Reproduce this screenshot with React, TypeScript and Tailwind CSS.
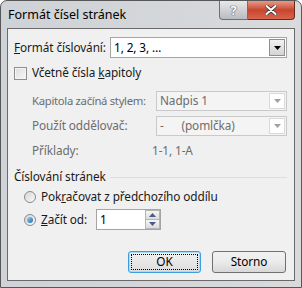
import React from "react";

const font = { fontFamily: '"Noto Sans", "Open Sans", sans-serif' };

function Arrow({ color = "#000" }: { color?: string }) {
  return (
    <svg width="7" height="4" viewBox="0 0 7 4">
      <path d="M0 0 H7 L3.5 4 Z" fill={color} />
    </svg>
  );
}

function DisabledSelect({ children }: { children: React.ReactNode }) {
  return (
    <div className="flex h-[20px] w-[131px] shrink-0 items-stretch border border-[#c9c9c9] bg-[#f4f4f4]">
      <div className="flex flex-1 items-center whitespace-pre pl-[3px] text-[#6d6d6d]">{children}</div>
      <div className="m-px flex w-[16px] items-center justify-center border border-[#d9d9d9] bg-white">
        <Arrow color="#a0a0a0" />
      </div>
    </div>
  );
}

export default function App() {
  return (
    <div
      className="relative flex h-[288px] w-[302px] flex-col overflow-hidden whitespace-nowrap rounded-t-[7px] border border-[#575757] bg-gradient-to-r from-[#cfd2d6] to-[#d8dadc] text-[11.8px] leading-none tracking-[-0.1px] text-[#1a1a1a]"
      style={font}
    >
      {/* title bar */}
      <div className="flex h-[27px] shrink-0 items-center pl-[7px] pt-[1px] text-[12.5px] tracking-normal text-black">
        Formát čísel stránek
      </div>
      <div className="absolute right-[6px] top-0 flex h-[19px]">
        <div className="flex w-[29px] items-center justify-center rounded-bl-[4px] border border-t-0 border-[#6c6f73] bg-gradient-to-b from-[#e6e8ea] to-[#b9bcc0] text-[13px] font-bold text-white [text-shadow:0_0_1px_#333,0_0_1px_#333]">
          ?
        </div>
        <div className="flex w-[47px] items-center justify-center rounded-br-[4px] border border-l-0 border-t-0 border-[#6b2a20] bg-gradient-to-b from-[#e59a88] via-[#c8452f] to-[#d8644c]">
          <svg width="12" height="10" viewBox="0 0 12 10">
            <path d="M1.5 1 L10.5 9 M10.5 1 L1.5 9" stroke="#3a3a3a" strokeWidth="3.6" strokeLinecap="round" />
            <path d="M1.5 1 L10.5 9 M10.5 1 L1.5 9" stroke="#fff" strokeWidth="2" strokeLinecap="round" />
          </svg>
        </div>
      </div>

      {/* client area */}
      <div className="mx-[6px] mb-[6px] flex flex-1 flex-col border border-[#6a6a6a] bg-[#f0f0f0] pl-[6px] pr-[7px]">
        {/* row 1 */}
        <div className="mt-[8px] flex h-[21px] items-center">
          <span className="w-[96px] shrink-0">
            <u>F</u>ormát číslování:
          </span>
          <div className="flex h-[21px] flex-1 items-stretch border border-[#a5a5a5] bg-white">
            <div className="flex flex-1 items-center pl-[3px] text-black">1, 2, 3, …</div>
            <div className="m-px flex w-[16px] items-center justify-center border border-[#8e8f8f] bg-gradient-to-b from-[#f2f2f2] to-[#d4d4d4]">
              <Arrow />
            </div>
          </div>
        </div>

        {/* row 2 checkbox */}
        <div className="mt-[8px] flex h-[14px] items-center">
          <div className="h-[13px] w-[13px] border border-[#8f8f8f] bg-gradient-to-br from-[#dcdcdc] to-[#f8f8f8] shadow-[inset_0_0_0_1px_#f4f4f4]" />
          <span className="ml-[5px]">
            Včetně čísla <u>k</u>apitoly
          </span>
        </div>

        {/* row 3 */}
        <div className="mt-[11px] flex h-[20px] items-center text-[#6d6d6d]">
          <span className="flex-1 pl-[18px] text-[11.3px] tracking-[-0.3px]">Kapitola začíná stylem:</span>
          <DisabledSelect>Nadpis 1</DisabledSelect>
        </div>

        {/* row 4 */}
        <div className="mt-[5px] flex h-[20px] items-center text-[#6d6d6d]">
          <span className="flex-1 pl-[18px]">Použít oddělovač:</span>
          <DisabledSelect>{"-      (pomlčka)"}</DisabledSelect>
        </div>

        {/* row 5 */}
        <div className="mt-[7px] flex h-[16px] items-center text-[#6d6d6d]">
          <span className="w-[138px] shrink-0 pl-[18px]">Příklady:</span>
          <span>1-1, 1-A</span>
        </div>

        {/* section */}
        <div className="mt-[10px] flex h-[16px] items-center">
          <span>Číslování stránek</span>
          <div className="ml-[4px] h-px flex-1 bg-[#d5dfe5]" />
        </div>

        {/* radio 1 */}
        <div className="mt-[4px] flex h-[16px] items-center pl-[10px]">
          <div className="h-[12px] w-[12px] rounded-full border border-[#8a8a8a] bg-gradient-to-br from-[#d6d6d6] to-[#fafafa]" />
          <span className="ml-[5px]">
            Pok<u>r</u>ačovat z předchozího oddílu
          </span>
        </div>

        {/* radio 2 */}
        <div className="mt-[4px] flex h-[21px] items-center pl-[10px]">
          <div className="flex h-[12px] w-[12px] items-center justify-center rounded-full border border-[#8a8a8a] bg-gradient-to-br from-[#d6d6d6] to-[#fafafa]">
            <div className="h-[6px] w-[6px] rounded-full bg-gradient-to-br from-[#8fd0f5] to-[#1a6fb0]" />
          </div>
          <span className="ml-[5px] w-[55px]">
            <u>Z</u>ačít od:
          </span>
          <div className="flex h-[21px] w-[65px] items-stretch border border-[#a5a5a5] bg-white">
            <div className="flex flex-1 items-center pl-[3px] text-black">1</div>
            <div className="flex w-[15px] flex-col">
              <div className="flex flex-1 items-center justify-center border border-[#b5b5b5] bg-gradient-to-b from-[#f6f6f6] to-[#dcdcdc]">
                <svg width="7" height="4" viewBox="0 0 7 4"><path d="M0 4 H7 L3.5 0 Z" fill="#4a5a8a" /></svg>
              </div>
              <div className="flex flex-1 items-center justify-center border border-t-0 border-[#b5b5b5] bg-gradient-to-b from-[#f6f6f6] to-[#dcdcdc]">
                <Arrow color="#4a5a8a" />
              </div>
            </div>
          </div>
        </div>

        {/* buttons */}
        <div className="mt-[21px] flex h-[22px] justify-end gap-[11px] pr-[1px]">
          <div className="flex w-[73px] items-center justify-center rounded-[3px] border border-[#3c9ee0] bg-gradient-to-b from-[#f2f2f2] to-[#dcdcdc] p-[2px] shadow-[inset_0_0_0_1px_#a8dcf6]">
            <div className="flex h-full w-full items-center justify-center border border-dotted border-black text-black">
              OK
            </div>
          </div>
          <div className="flex w-[74px] items-center justify-center rounded-[3px] border border-[#707070] bg-gradient-to-b from-[#f2f2f2] via-[#ebebeb] to-[#d8d8d8] text-black">
            Storno
          </div>
        </div>
      </div>
    </div>
  );
}
